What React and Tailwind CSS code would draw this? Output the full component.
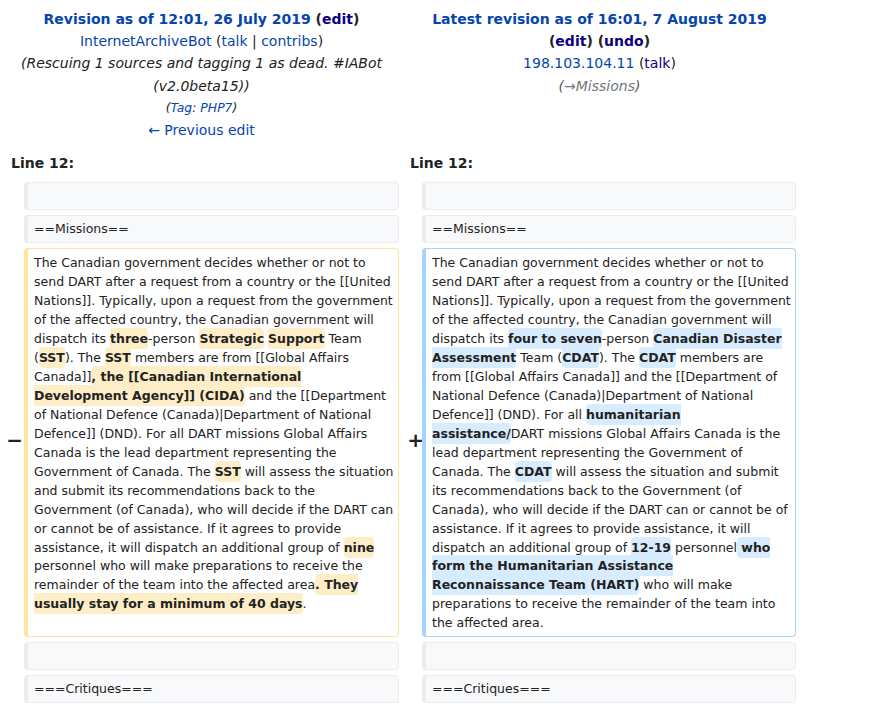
import React from "react";

const LINK = "text-[#0645ad]";
const VISITED = "text-[#0b0080]";

function Del({ children }) {
  return (
    <span className="bg-[#feeec8] font-bold rounded-[4px] py-[3px]">{children}</span>
  );
}

function Add({ children }) {
  return (
    <span className="bg-[#d8ecff] font-bold rounded-[4px] py-[3px]">{children}</span>
  );
}

function ContextBox({ text }) {
  return (
    <div className="h-[28px] bg-[#f8f9fa] border border-[#eaecf0] border-l-4 rounded-[4px] pl-[6px] pr-[6px] pt-[4px] leading-[18.95px] whitespace-nowrap">
      {text}
    </div>
  );
}

function Marker({ children, className = "" }) {
  return (
    <div className={`flex items-center justify-end pb-[6px] text-[20px] font-bold leading-none ${className}`}>
      {children}
    </div>
  );
}

export default function App() {
  return (
    <div className="w-[874px] h-[708px] overflow-hidden bg-white text-[#222] font-['DejaVu_Sans',sans-serif]">
      <div className="grid grid-cols-[24px_375px_23px_374px]">
        {/* revision headers */}
        <div className="col-span-2 pt-[8px] pl-[4px] text-center text-[14px] leading-[22.2px]">
          <div className="font-bold">
            <a className={LINK}>Revision as of 12:01, 26 July 2019</a>{" "}
            (<a className={VISITED}>edit</a>)
          </div>
          <div>
            <a className={LINK}>InternetArchiveBot</a> (<a className={LINK}>talk</a> |{" "}
            <a className={LINK}>contribs</a>)
          </div>
          <div className="italic">
            (Rescuing 1 sources and tagging 1 as dead. #IABot
            <br />
            (v2.0beta15))
          </div>
          <div className="italic text-[12.4px]">
            (<a className={LINK}>Tag</a>: <a className={LINK}>PHP7</a>)
          </div>
          <div>
            <a className={LINK}>← Previous edit</a>
          </div>
        </div>
        <div className="col-span-2 pt-[8px] pl-[4px] text-center text-[14px] leading-[22.2px]">
          <div className="font-bold">
            <a className={LINK}>Latest revision as of 16:01, 7 August 2019</a>
          </div>
          <div className="font-bold">
            (<a className={VISITED}>edit</a>) (<a className={VISITED}>undo</a>)
          </div>
          <div>
            <a className={LINK}>198.103.104.11</a> (<a className={VISITED}>talk</a>)
          </div>
          <div className="italic text-[#54595d]">
            (<span className="text-[#72777d]">→Missions</span>)
          </div>
        </div>

        {/* line numbers */}
        <div className="col-span-2 mt-[11px] pl-[11px] text-[14px] leading-[22px] font-bold">Line 12:</div>
        <div className="col-span-2 mt-[11px] pl-[11px] text-[14px] leading-[22px] font-bold">Line 12:</div>
      </div>

      <div className="mt-[8px] grid grid-cols-[24px_375px_23px_374px] gap-y-[5px] text-[12.5px] leading-[18.95px]">
        <div />
        <ContextBox text="" />
        <div />
        <ContextBox text="" />

        <div />
        <ContextBox text="==Missions==" />
        <div />
        <ContextBox text="==Missions==" />

        <Marker className="pr-[1px]">−</Marker>
        <div className="bg-white border border-[#ffe49c] border-l-4 rounded-[4px] pl-[6px] pr-[4px] pt-[5px] pb-[3px]">
          The Canadian government decides whether or not to<br />
          send DART after a request from a country or the [[United<br />
          Nations]]. Typically, upon a request from the government<br />
          of the affected country, the Canadian government will<br />
          dispatch its <Del>three</Del>-person <Del>Strategic</Del> <Del>Support</Del> Team<br />
          (<Del>SST</Del>). The <Del>SST</Del> members are from [[Global Affairs<br />
          Canada]]<Del>, the [[Canadian International <br />Development Agency]] (CIDA)</Del> and the [[Department<br />
          of National Defence (Canada)|Department of National<br />
          Defence]] (DND). For all DART missions Global Affairs<br />
          Canada is the lead department representing the<br />
          Government of Canada. The <Del>SST</Del> will assess the situation<br />
          and submit its recommendations back to the<br />
          Government (of Canada), who will decide if the DART can<br />
          or cannot be of assistance. If it agrees to provide<br />
          assistance, it will dispatch an additional group of <Del>nine</Del><br />
          personnel who will make preparations to receive the<br />
          remainder of the team into the affected area<Del>. They <br />usually stay for a minimum of 40 days</Del>.
        </div>
        <Marker className="-mr-[2px]">+</Marker>
        <div className="bg-white border border-[#a3d3ff] border-l-4 rounded-[4px] pl-[6px] pr-[4px] pt-[5px] pb-[3px]">
          The Canadian government decides whether or not to<br />
          send DART after a request from a country or the [[United<br />
          Nations]]. Typically, upon a request from the government<br />
          of the affected country, the Canadian government will<br />
          dispatch its <Add>four to seven</Add>-person <Add>Canadian Disaster <br />Assessment</Add> Team (<Add>CDAT</Add>). The <Add>CDAT</Add> members are<br />
          from [[Global Affairs Canada]] and the [[Department of<br />
          National Defence (Canada)|Department of National<br />
          Defence]] (DND). For all <Add>humanitarian <br />assistance/</Add>DART missions Global Affairs Canada is the<br />
          lead department representing the Government of<br />
          Canada. The <Add>CDAT</Add> will assess the situation and submit<br />
          its recommendations back to the Government (of<br />
          Canada), who will decide if the DART can or cannot be of<br />
          assistance. If it agrees to provide assistance, it will<br />
          dispatch an additional group of <Add>12-19</Add> personnel<Add> who <br />form the Humanitarian Assistance <br />Reconnaissance Team (HART)</Add> who will make<br />
          preparations to receive the remainder of the team into<br />
          the affected area.
        </div>

        <div />
        <ContextBox text="" />
        <div />
        <ContextBox text="" />

        <div />
        <ContextBox text="===Critiques===" />
        <div />
        <ContextBox text="===Critiques===" />
      </div>
    </div>
  );
}
